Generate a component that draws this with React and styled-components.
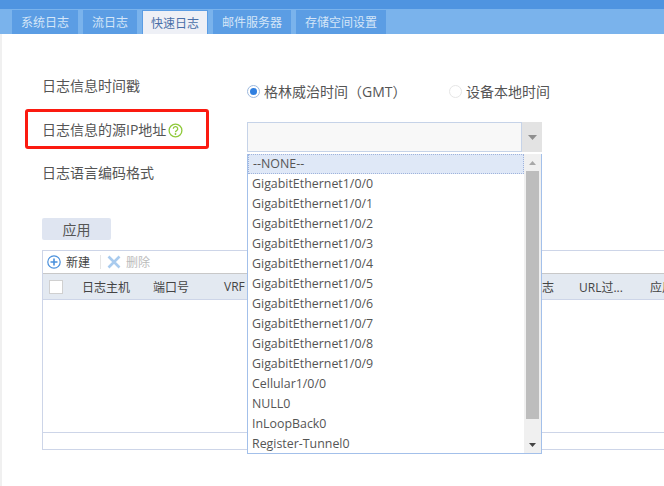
import styled, { createGlobalStyle } from "styled-components";

const tabs = ["系统日志", "流日志", "快速日志", "邮件服务器", "存储空间设置"];

const options = [
  "--NONE--",
  "GigabitEthernet1/0/0",
  "GigabitEthernet1/0/1",
  "GigabitEthernet1/0/2",
  "GigabitEthernet1/0/3",
  "GigabitEthernet1/0/4",
  "GigabitEthernet1/0/5",
  "GigabitEthernet1/0/6",
  "GigabitEthernet1/0/7",
  "GigabitEthernet1/0/8",
  "GigabitEthernet1/0/9",
  "Cellular1/0/0",
  "NULL0",
  "InLoopBack0",
  "Register-Tunnel0",
];

const columns = [
  { name: "日志主机", width: 71 },
  { name: "端口号", width: 71 },
  { name: "VRF", width: 306 },
  { name: "日志", width: 49 },
  { name: "URL过...", width: 71 },
  { name: "应用", width: 40 },
];

const GlobalStyle = createGlobalStyle`
  html, body {
    margin: 0;
    padding: 0;
    background: #fff;
    overflow: hidden;
  }
  body {
    font-family: "Open Sans", "Noto Sans CJK SC", sans-serif;
    font-size: 13px;
    color: #555;
  }
`;

const Page = styled.div`
  position: relative;
  width: 664px;
  height: 486px;
  overflow: hidden;
`;

const TopBar = styled.div`
  height: 9px;
  background: #4f94e0;
`;

const TabBar = styled.div`
  display: flex;
  gap: 5px;
  height: 25px;
  padding: 1px 0 0 12px;
  box-sizing: border-box;
  background: #7ab3ec;
`;

const Tab = styled.div`
  display: flex;
  align-items: center;
  justify-content: center;
  height: 24px;
  padding: 0 ${(p) => (p.$active ? 8 : 9)}px;
  font-size: 12px;
  box-sizing: border-box;
  background: ${(p) => (p.$active ? "#eef0f6" : "#5b9de4")};
  color: ${(p) => (p.$active ? "#4a6fa8" : "#d5e6f8")};
  border: ${(p) => (p.$active ? "1px solid #5b9de4" : "none")};
  border-bottom: none;
`;

const Body = styled.div`
  height: 452px;
  border-left: 2px solid #f0f0f0;
  padding: 40px 0 0 24px;
  box-sizing: border-box;
`;

const FormRow = styled.div`
  display: flex;
  align-items: ${(p) => p.$align || "center"};
  height: ${(p) => p.$h}px;
  margin-top: ${(p) => p.$mt || 0}px;
`;

const Label = styled.div`
  display: flex;
  align-items: center;
  width: 205px;
  margin-left: 16px;
  font-size: 14px;
  color: #555;
  line-height: 16px;
`;

const RadioGroup = styled.label`
  display: flex;
  align-items: center;
  width: ${(p) => p.$w}px;
  font-size: 14px;
  color: #555;
  position: relative;
  top: 5px;
  white-space: nowrap;
`;

const RadioDot = styled.span`
  width: 11px;
  height: 11px;
  margin-right: 4px;
  border-radius: 50%;
  border: 1px solid ${(p) => (p.$on ? "#9db9de" : "#e6e6e6")};
  display: flex;
  align-items: center;
  justify-content: center;
  &::after {
    content: "";
    width: 7px;
    height: 7px;
    border-radius: 50%;
    background: ${(p) => (p.$on ? "#2f7fe0" : "transparent")};
  }
`;

const SelectBox = styled.div`
  display: flex;
  width: 295px;
  height: 30px;
`;

const SelectInput = styled.div`
  flex: 1;
  background: #f8f8f8;
  border: 1px solid #c6d3e8;
`;

const SelectArrow = styled.div`
  width: 20px;
  background: #e3e3e3;
  display: flex;
  align-items: center;
  justify-content: center;
`;

const ApplyButton = styled.div`
  width: 69px;
  height: 22px;
  margin-left: 16px;
  border-radius: 2px;
  background: #dfe5f1;
  color: #555;
  display: flex;
  align-items: center;
  justify-content: center;
  font-size: 14px;
`;

const Grid = styled.div`
  width: 622px;
  margin: 10px 0 0 16px;
  height: 200px;
  border: 1px solid #cdd5e8;
  border-right: none;
  box-sizing: border-box;
`;

const GridTools = styled.div`
  display: flex;
  align-items: center;
  height: 22px;
  padding-left: 4px;
  font-size: 12px;
`;

const ToolItem = styled.div`
  display: flex;
  align-items: center;
  gap: 5px;
  color: ${(p) => (p.$off ? "#bbb" : "#444")};
`;

const ToolSep = styled.div`
  width: 1px;
  height: 14px;
  margin: 0 6px 0 10px;
  background: #e6e6e6;
`;

const GridHead = styled.div`
  display: flex;
  align-items: center;
  height: 27px;
  padding-left: 6px;
  background: #e3e9f1;
  border-top: 1px solid #c8c8c8;
  border-bottom: 1px solid #cdd5e8;
  box-sizing: border-box;
  font-size: 12px;
  color: #444;
`;

const HeadCheck = styled.span`
  width: 12px;
  height: 12px;
  margin-right: 19px;
  flex: none;
  border: 1px solid #d0d0d0;
  background: #fff;
`;

const HeadCell = styled.div`
  flex: none;
  white-space: nowrap;
  width: ${(p) => p.$w}px;
`;

const GridEmpty = styled.div`
  height: 132px;
  border-bottom: 1px solid #cdd5e8;
`;

const RedMark = styled.div`
  position: absolute;
  left: 25px;
  top: 109px;
  width: 184px;
  height: 40px;
  box-sizing: border-box;
  border: 3px solid #fb1a10;
  border-radius: 3px;
`;

const Dropdown = styled.div`
  position: absolute;
  left: 247px;
  top: 154px;
  width: 295px;
  height: 300px;
  box-sizing: border-box;
  display: flex;
  background: #fff;
  border: 1px solid #a3c0ea;
  border-top: none;
`;

const OptionList = styled.div`
  flex: 1;
  min-width: 0;
`;

const Option = styled.div`
  height: 20px;
  line-height: 20px;
  padding-left: 4px;
  box-sizing: border-box;
  font-size: 12.4px;
  color: #555;
  white-space: nowrap;
  ${(p) =>
    p.$active &&
    `
    background: #dfe8f7;
    border: 1px dotted #9fb3dc;
    line-height: 18px;
  `}
`;

const ScrollTrack = styled.div`
  width: 17px;
  background: #f0f0f0;
  display: flex;
  flex-direction: column;
  align-items: center;
`;

const ScrollBtn = styled.div`
  height: 17px;
  width: 100%;
  display: flex;
  align-items: center;
  justify-content: center;
`;

const ScrollThumb = styled.div`
  width: 13px;
  height: 248px;
  background: #bdbdbd;
`;

const ScrollRest = styled.div`
  flex: 1;
`;

const HelpSvg = styled.svg`
  margin-left: 2px;
  flex: none;
`;

function Triangle({ dir = "down", color = "#8e8e8e", w = 9, h = 5 }) {
  const points = dir === "down" ? `0,0 ${w},0 ${w / 2},${h}` : `0,${h} ${w},${h} ${w / 2},0`;
  return (
    <svg width={w} height={h} viewBox={`0 0 ${w} ${h}`}>
      <polygon points={points} fill={color} />
    </svg>
  );
}

function HelpIcon() {
  return (
    <HelpSvg width="15" height="15" viewBox="0 0 15 15">
      <circle cx="7.5" cy="7.5" r="6.4" fill="none" stroke="#8fc93a" strokeWidth="1.3" />
      <path d="M5.3 5.8a2.2 2.2 0 1 1 3.3 1.9c-.8.4-1.1.8-1.1 1.6" fill="none" stroke="#8fc93a" strokeWidth="1.3" />
      <circle cx="7.5" cy="11" r=".9" fill="#8fc93a" />
    </HelpSvg>
  );
}

function AddIcon() {
  return (
    <svg width="14" height="14" viewBox="0 0 14 14">
      <circle cx="7" cy="7" r="6.2" fill="none" stroke="#4a90dc" strokeWidth="1.2" />
      <path d="M3.5 7h7M7 3.5v7" stroke="#4a90dc" strokeWidth="1.6" />
    </svg>
  );
}

function DeleteIcon() {
  return (
    <svg width="14" height="14" viewBox="0 0 14 14">
      <path d="M1.5 1.5l11 11M12.5 1.5l-11 11" stroke="#a9cbee" strokeWidth="2.6" />
    </svg>
  );
}

export default function App() {
  return (
    <Page>
      <GlobalStyle />
      <TopBar />
      <TabBar>
        {tabs.map((t, i) => (
          <Tab key={t} $active={i === 2}>
            {t}
          </Tab>
        ))}
      </TabBar>
      <Body>
        <FormRow $h={24}>
          <Label>日志信息时间戳</Label>
          <RadioGroup $w={202}>
            <RadioDot $on />
            格林威治时间（GMT）
          </RadioGroup>
          <RadioGroup>
            <RadioDot />
            设备本地时间
          </RadioGroup>
        </FormRow>
        <FormRow $h={30} $mt={24} $align="flex-start">
          <Label>
            日志信息的源IP地址
            <HelpIcon />
          </Label>
          <SelectBox>
            <SelectInput />
            <SelectArrow>
              <Triangle />
            </SelectArrow>
          </SelectBox>
        </FormRow>
        <FormRow $h={42}>
          <Label>日志语言编码格式</Label>
        </FormRow>
        <FormRow $h={22} $mt={24}>
          <ApplyButton>应用</ApplyButton>
        </FormRow>
        <Grid>
          <GridTools>
            <ToolItem>
              <AddIcon />
              新建
            </ToolItem>
            <ToolSep />
            <ToolItem $off>
              <DeleteIcon />
              删除
            </ToolItem>
          </GridTools>
          <GridHead>
            <HeadCheck />
            {columns.map((c) => (
              <HeadCell key={c.name} $w={c.width}>
                {c.name}
              </HeadCell>
            ))}
          </GridHead>
          <GridEmpty />
        </Grid>
      </Body>
      <RedMark />
      <Dropdown>
        <OptionList>
          {options.map((o, i) => (
            <Option key={o} $active={i === 0}>
              {o}
            </Option>
          ))}
        </OptionList>
        <ScrollTrack>
          <ScrollBtn>
            <Triangle dir="up" color="#a8a8a8" w={7} h={4} />
          </ScrollBtn>
          <ScrollThumb />
          <ScrollRest />
          <ScrollBtn>
            <Triangle color="#444" w={7} h={4} />
          </ScrollBtn>
        </ScrollTrack>
      </Dropdown>
    </Page>
  );
}
